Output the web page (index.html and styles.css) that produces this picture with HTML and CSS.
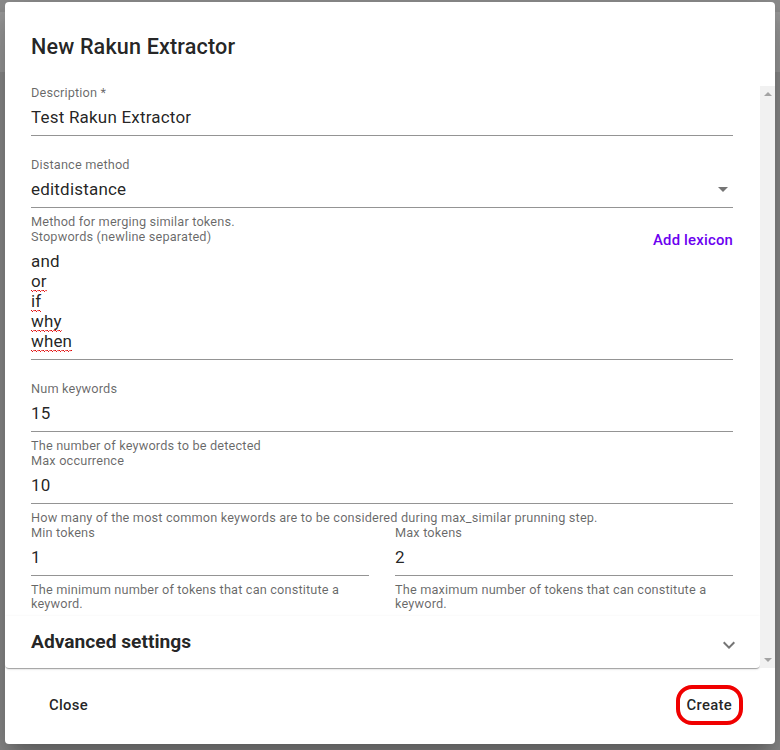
FILE: index.html
```html
<!DOCTYPE html>
<html lang="en">
<head>
<meta charset="utf-8">
<title>New Rakun Extractor</title>
<link rel="stylesheet" href="styles.css">
</head>
<body>
<div class="dialog">
  <h2 class="dialog-title">New Rakun Extractor</h2>
  <div class="dialog-body">
    <div class="content">
      <div class="fields">
        <div class="field field-plain">
          <div class="label">Description *</div>
          <div class="input">Test Rakun Extractor</div>
        </div>
        <div class="field">
          <div class="label">Distance method</div>
          <div class="input select">
            <span>editdistance</span>
            <svg class="arrow" width="24" height="24" viewBox="0 0 24 24"><path d="M7 10l5 5 5-5z"/></svg>
          </div>
          <div class="helper">Method for merging similar tokens.</div>
        </div>
        <div class="field field-plain">
          <div class="label-row">
            <div class="label">Stopwords (newline separated)</div>
            <button class="text-btn">Add lexicon</button>
          </div>
          <div class="textarea">
            <div>and</div>
            <div><span class="typo">or</span></div>
            <div><span class="typo">if</span></div>
            <div><span class="typo">why</span></div>
            <div><span class="typo">when</span></div>
          </div>
        </div>
        <div class="field">
          <div class="label">Num keywords</div>
          <div class="input">15</div>
          <div class="helper">The number of keywords to be detected</div>
        </div>
        <div class="field">
          <div class="label">Max occurrence</div>
          <div class="input">10</div>
          <div class="helper">How many of the most common keywords are to be considered during max_similar prunning step.</div>
        </div>
        <div class="row">
          <div class="field">
            <div class="label">Min tokens</div>
            <div class="input">1</div>
            <div class="helper">The minimum number of tokens that can constitute a keyword.</div>
          </div>
          <div class="field">
            <div class="label">Max tokens</div>
            <div class="input">2</div>
            <div class="helper">The maximum number of tokens that can constitute a keyword.</div>
          </div>
        </div>
      </div>
      <div class="accordion">
        <span class="accordion-title">Advanced settings</span>
        <svg class="chevron" width="24" height="24" viewBox="0 0 24 24"><path d="M16.59 8.59 12 13.17 7.41 8.59 6 10l6 6 6-6z"/></svg>
      </div>
    </div>
    <div class="scrollbar">
      <span class="sb-up"></span>
      <span class="sb-down"></span>
    </div>
  </div>
  <div class="dialog-actions">
    <button class="action-btn close-btn">Close</button>
    <button class="action-btn create-btn">Create</button>
  </div>
</div>
</body>
</html>
```
FILE: styles.css
```css
* { box-sizing: border-box; }

html, body {
  margin: 0;
  height: 100%;
}

body {
  font-family: Roboto, "Liberation Sans", Arial, sans-serif;
  color: rgba(0, 0, 0, 0.87);
  background: linear-gradient(to bottom, #8e8e8e 0, #8e8e8e 12px, #9a9a9a 12px, #9a9a9a 72px, #8c8c8c 72px, #8c8c8c 100%);
  overflow: hidden;
}

.dialog {
  margin: 2px 0 0 5px;
  width: 770px;
  height: 742px;
  background: #fff;
  border-radius: 4px;
  box-shadow: 0 11px 15px -7px rgba(0,0,0,0.2), 0 24px 38px 3px rgba(0,0,0,0.14), 0 9px 46px 8px rgba(0,0,0,0.12);
  display: flex;
  flex-direction: column;
  overflow: hidden;
}

.dialog-title {
  margin: 0;
  padding: 29px 26px 23px;
  font-size: 21.6px;
  line-height: 32px;
  font-weight: 500;
  letter-spacing: 0.15px;
  color: rgba(0, 0, 0, 0.87);
}

.dialog-body {
  display: flex;
  height: 582px;
}

.content {
  flex: 1;
  display: flex;
  flex-direction: column;
}

.fields {
  padding: 0 27px 0 26px;
}

.field {
  margin-bottom: 1px;
}

.field-plain {
  margin-bottom: 22px;
}

.label {
  font-size: 12.75px;
  line-height: 14px;
  color: rgba(0, 0, 0, 0.6);
  letter-spacing: 0.15px;
}

.input {
  margin-top: 5px;
  font-size: 17px;
  line-height: 24px;
  padding-bottom: 6px;
  border-bottom: 1px solid #949494;
  letter-spacing: 0.2px;
}

.select {
  display: flex;
  justify-content: space-between;
  align-items: flex-start;
}

.arrow {
  margin-right: -2px;
  fill: #757575;
}

.helper {
  margin-top: 7px;
  font-size: 12.75px;
  line-height: 14px;
  color: rgba(0, 0, 0, 0.6);
  letter-spacing: 0.15px;
}

.label-row {
  display: flex;
  justify-content: space-between;
  align-items: flex-start;
  height: 14px;
}

.text-btn {
  border: 0;
  background: none;
  padding: 0;
  margin-top: 2px;
  font-family: inherit;
  font-size: 14.875px;
  line-height: 16px;
  font-weight: 500;
  color: #6b00f0;
  letter-spacing: 0.2px;
}

.textarea {
  margin-top: 2px;
  padding: 5px 0 8px;
  font-size: 17px;
  line-height: 20px;
  border-bottom: 1px solid #949494;
  letter-spacing: 0.15px;
}

.typo {
  padding-bottom: 1px;
  background-image:
    linear-gradient(45deg, transparent 65%, #e00000 80%, transparent 90%),
    linear-gradient(135deg, transparent 5%, #e00000 15%, transparent 25%),
    linear-gradient(135deg, transparent 45%, #e00000 55%, transparent 65%),
    linear-gradient(45deg, transparent 25%, #e00000 35%, transparent 50%);
  background-size: 4px 2px;
  background-repeat: repeat-x;
  background-position: left bottom;
}

.row {
  display: grid;
  grid-template-columns: 1fr 1fr;
  column-gap: 26px;
}

.accordion {
  margin-top: 4px;
  height: 53px;
  display: flex;
  align-items: center;
  justify-content: space-between;
  padding: 0 19px 0 26px;
  border-radius: 0 0 4px 4px;
  box-shadow: 0 2px 1px -1px rgba(0,0,0,0.2), 0 1px 1px 0 rgba(0,0,0,0.14), 0 1px 3px 0 rgba(0,0,0,0.12);
}

.accordion-title {
  font-size: 19.2px;
  line-height: 32px;
  font-weight: 700;
  color: rgba(0, 0, 0, 0.87);
}

.chevron {
  fill: #757575;
  margin-top: 6px;
}

.scrollbar {
  width: 15px;
  background: #f1f1f1;
  display: flex;
  flex-direction: column;
  justify-content: space-between;
  align-items: center;
  padding: 6px 0;
}

.sb-up, .sb-down {
  width: 0;
  height: 0;
  border-left: 4px solid transparent;
  border-right: 4px solid transparent;
}

.sb-up {
  border-bottom: 4px solid #a3a3a3;
}

.sb-down {
  border-top: 4px solid #a3a3a3;
}

.dialog-actions {
  flex: 1;
  display: flex;
  align-items: center;
  justify-content: space-between;
  padding: 0 32px 2px 36px;
}

.action-btn {
  border: 0;
  background: none;
  font-family: inherit;
  font-size: 14.875px;
  font-weight: 500;
  letter-spacing: 0.3px;
  color: rgba(0, 0, 0, 0.87);
  padding: 0 8px;
  height: 40px;
  line-height: 40px;
}

.create-btn {
  border: 4px solid #f00000;
  border-radius: 16px;
  padding: 0 7px;
  line-height: 32px;
}
```
